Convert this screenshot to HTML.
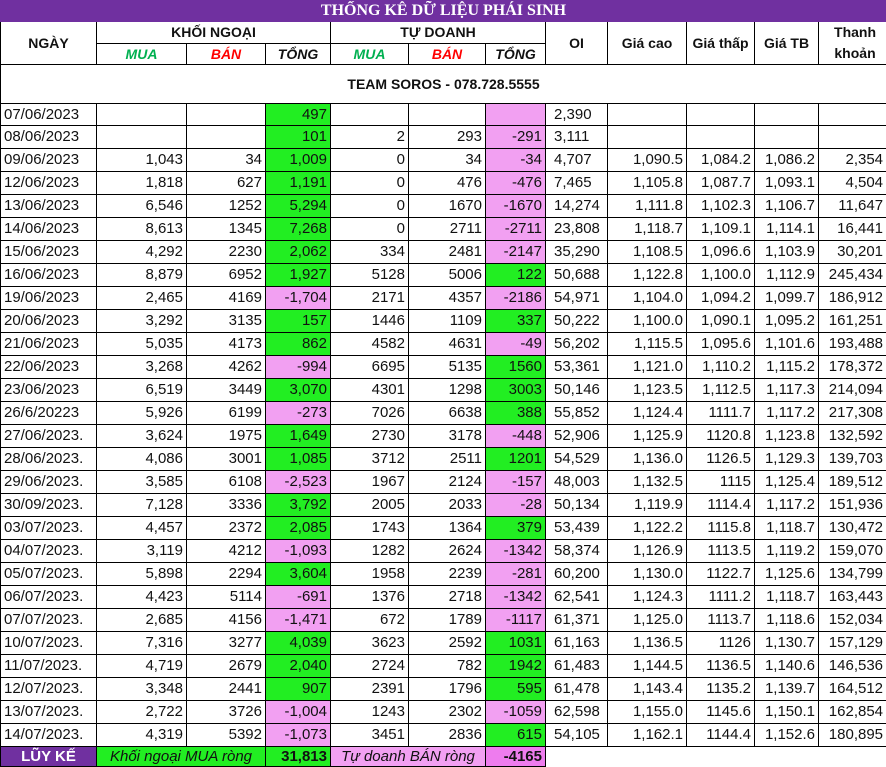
<!DOCTYPE html>
<html><head><meta charset="utf-8"><style>
body{margin:0;background:#fff;width:886px;height:766px;overflow:hidden}
table{border-collapse:collapse;table-layout:fixed;width:886px;font-family:"Liberation Sans",sans-serif;font-size:15px;color:#111}
td{border:1px solid #000;padding:0 3px;text-align:right;white-space:nowrap;overflow:hidden;height:22px;line-height:18px}
td:first-child{text-align:left}
td:nth-child(8){text-align:left;padding-left:8px}
.g{background:#22ee22}.p{background:#f2a0f2}
.t{background:#7030a0;color:#fff;font-family:"Liberation Serif",serif;font-weight:bold;text-align:center!important;font-size:16px;height:20px;border-color:#7030a0}
.h{font-weight:bold;text-align:center!important;font-size:14px;height:20px}
.m{color:#00b050;font-style:italic}.b{color:#ff0000;font-style:italic}.s{font-style:italic}
tr.d21 td{height:21px}
.f td{height:19px}
</style></head><body>
<table>
<colgroup><col style="width:96px"><col style="width:90px"><col style="width:79px"><col style="width:65px"><col style="width:78px"><col style="width:77px"><col style="width:60px"><col style="width:62px"><col style="width:79px"><col style="width:68px"><col style="width:64px"><col style="width:68px"></colgroup>
<tr><td class="t" colspan="12">THỐNG KÊ DỮ LIỆU PHÁI SINH</td></tr>
<tr><td class="h" rowspan="2">NGÀY</td><td class="h" colspan="3">KHỐI NGOẠI</td><td class="h" colspan="3">TỰ DOANH</td><td class="h" rowspan="2" style="text-align:center">OI</td><td class="h" rowspan="2">Giá cao</td><td class="h" rowspan="2">Giá thấp</td><td class="h" rowspan="2">Giá TB</td><td class="h" rowspan="2" style="line-height:21px">Thanh<br>khoản</td></tr>
<tr><td class="h m">MUA</td><td class="h b">BÁN</td><td class="h s">TỔNG</td><td class="h m">MUA</td><td class="h b">BÁN</td><td class="h s">TỔNG</td></tr>
<tr><td class="h" colspan="12" style="height:38px">TEAM SOROS - 078.728.5555</td></tr>
<tr class="d21"><td>07/06/2023</td><td></td><td></td><td class="g">497</td><td></td><td></td><td class="p"></td><td>2,390</td><td></td><td></td><td></td><td></td></tr>
<tr><td>08/06/2023</td><td></td><td></td><td class="g">101</td><td>2</td><td>293</td><td class="p">-291</td><td>3,111</td><td></td><td></td><td></td><td></td></tr>
<tr><td>09/06/2023</td><td>1,043</td><td>34</td><td class="g">1,009</td><td>0</td><td>34</td><td class="p">-34</td><td>4,707</td><td>1,090.5</td><td>1,084.2</td><td>1,086.2</td><td>2,354</td></tr>
<tr><td>12/06/2023</td><td>1,818</td><td>627</td><td class="g">1,191</td><td>0</td><td>476</td><td class="p">-476</td><td>7,465</td><td>1,105.8</td><td>1,087.7</td><td>1,093.1</td><td>4,504</td></tr>
<tr><td>13/06/2023</td><td>6,546</td><td>1252</td><td class="g">5,294</td><td>0</td><td>1670</td><td class="p">-1670</td><td>14,274</td><td>1,111.8</td><td>1,102.3</td><td>1,106.7</td><td>11,647</td></tr>
<tr><td>14/06/2023</td><td>8,613</td><td>1345</td><td class="g">7,268</td><td>0</td><td>2711</td><td class="p">-2711</td><td>23,808</td><td>1,118.7</td><td>1,109.1</td><td>1,114.1</td><td>16,441</td></tr>
<tr><td>15/06/2023</td><td>4,292</td><td>2230</td><td class="g">2,062</td><td>334</td><td>2481</td><td class="p">-2147</td><td>35,290</td><td>1,108.5</td><td>1,096.6</td><td>1,103.9</td><td>30,201</td></tr>
<tr><td>16/06/2023</td><td>8,879</td><td>6952</td><td class="g">1,927</td><td>5128</td><td>5006</td><td class="g">122</td><td>50,688</td><td>1,122.8</td><td>1,100.0</td><td>1,112.9</td><td>245,434</td></tr>
<tr><td>19/06/2023</td><td>2,465</td><td>4169</td><td class="p">-1,704</td><td>2171</td><td>4357</td><td class="p">-2186</td><td>54,971</td><td>1,104.0</td><td>1,094.2</td><td>1,099.7</td><td>186,912</td></tr>
<tr><td>20/06/2023</td><td>3,292</td><td>3135</td><td class="g">157</td><td>1446</td><td>1109</td><td class="g">337</td><td>50,222</td><td>1,100.0</td><td>1,090.1</td><td>1,095.2</td><td>161,251</td></tr>
<tr><td>21/06/2023</td><td>5,035</td><td>4173</td><td class="g">862</td><td>4582</td><td>4631</td><td class="p">-49</td><td>56,202</td><td>1,115.5</td><td>1,095.6</td><td>1,101.6</td><td>193,488</td></tr>
<tr><td>22/06/2023</td><td>3,268</td><td>4262</td><td class="p">-994</td><td>6695</td><td>5135</td><td class="g">1560</td><td>53,361</td><td>1,121.0</td><td>1,110.2</td><td>1,115.2</td><td>178,372</td></tr>
<tr><td>23/06/2023</td><td>6,519</td><td>3449</td><td class="g">3,070</td><td>4301</td><td>1298</td><td class="g">3003</td><td>50,146</td><td>1,123.5</td><td>1,112.5</td><td>1,117.3</td><td>214,094</td></tr>
<tr><td>26/6/20223</td><td>5,926</td><td>6199</td><td class="p">-273</td><td>7026</td><td>6638</td><td class="g">388</td><td>55,852</td><td>1,124.4</td><td>1111.7</td><td>1,117.2</td><td>217,308</td></tr>
<tr><td>27/06/2023.</td><td>3,624</td><td>1975</td><td class="g">1,649</td><td>2730</td><td>3178</td><td class="p">-448</td><td>52,906</td><td>1,125.9</td><td>1120.8</td><td>1,123.8</td><td>132,592</td></tr>
<tr><td>28/06/2023.</td><td>4,086</td><td>3001</td><td class="g">1,085</td><td>3712</td><td>2511</td><td class="g">1201</td><td>54,529</td><td>1,136.0</td><td>1126.5</td><td>1,129.3</td><td>139,703</td></tr>
<tr><td>29/06/2023.</td><td>3,585</td><td>6108</td><td class="p">-2,523</td><td>1967</td><td>2124</td><td class="p">-157</td><td>48,003</td><td>1,132.5</td><td>1115</td><td>1,125.4</td><td>189,512</td></tr>
<tr><td>30/09/2023.</td><td>7,128</td><td>3336</td><td class="g">3,792</td><td>2005</td><td>2033</td><td class="p">-28</td><td>50,134</td><td>1,119.9</td><td>1114.4</td><td>1,117.2</td><td>151,936</td></tr>
<tr><td>03/07/2023.</td><td>4,457</td><td>2372</td><td class="g">2,085</td><td>1743</td><td>1364</td><td class="g">379</td><td>53,439</td><td>1,122.2</td><td>1115.8</td><td>1,118.7</td><td>130,472</td></tr>
<tr><td>04/07/2023.</td><td>3,119</td><td>4212</td><td class="p">-1,093</td><td>1282</td><td>2624</td><td class="p">-1342</td><td>58,374</td><td>1,126.9</td><td>1113.5</td><td>1,119.2</td><td>159,070</td></tr>
<tr><td>05/07/2023.</td><td>5,898</td><td>2294</td><td class="g">3,604</td><td>1958</td><td>2239</td><td class="p">-281</td><td>60,200</td><td>1,130.0</td><td>1122.7</td><td>1,125.6</td><td>134,799</td></tr>
<tr><td>06/07/2023.</td><td>4,423</td><td>5114</td><td class="p">-691</td><td>1376</td><td>2718</td><td class="p">-1342</td><td>62,541</td><td>1,124.3</td><td>1111.2</td><td>1,118.7</td><td>163,443</td></tr>
<tr><td>07/07/2023.</td><td>2,685</td><td>4156</td><td class="p">-1,471</td><td>672</td><td>1789</td><td class="p">-1117</td><td>61,371</td><td>1,125.0</td><td>1113.7</td><td>1,118.6</td><td>152,034</td></tr>
<tr><td>10/07/2023.</td><td>7,316</td><td>3277</td><td class="g">4,039</td><td>3623</td><td>2592</td><td class="g">1031</td><td>61,163</td><td>1,136.5</td><td>1126</td><td>1,130.7</td><td>157,129</td></tr>
<tr><td>11/07/2023.</td><td>4,719</td><td>2679</td><td class="g">2,040</td><td>2724</td><td>782</td><td class="g">1942</td><td>61,483</td><td>1,144.5</td><td>1136.5</td><td>1,140.6</td><td>146,536</td></tr>
<tr><td>12/07/2023.</td><td>3,348</td><td>2441</td><td class="g">907</td><td>2391</td><td>1796</td><td class="g">595</td><td>61,478</td><td>1,143.4</td><td>1135.2</td><td>1,139.7</td><td>164,512</td></tr>
<tr><td>13/07/2023.</td><td>2,722</td><td>3726</td><td class="p">-1,004</td><td>1243</td><td>2302</td><td class="p">-1059</td><td>62,598</td><td>1,155.0</td><td>1145.6</td><td>1,150.1</td><td>162,854</td></tr>
<tr><td>14/07/2023.</td><td>4,319</td><td>5392</td><td class="p">-1,073</td><td>3451</td><td>2836</td><td class="g">615</td><td>54,105</td><td>1,162.1</td><td>1144.4</td><td>1,152.6</td><td>180,895</td></tr>
<tr class="f"><td style="background:#7030a0;color:#fff;font-weight:bold;text-align:center">LŨY KẾ</td><td colspan="2" class="g" style="font-style:italic;text-align:center">Khối ngoại MUA ròng</td><td class="g" style="font-weight:bold">31,813</td><td colspan="2" class="p" style="font-style:italic;text-align:center">Tự doanh BÁN ròng</td><td style="background:#ee7cee;font-weight:bold">-4165</td><td style="border:none;border-left:1px solid #000;border-top:1px solid #000"></td><td style="border:none"></td><td style="border:none"></td><td style="border:none"></td><td style="border:none"></td></tr>
</table>
</body></html>
